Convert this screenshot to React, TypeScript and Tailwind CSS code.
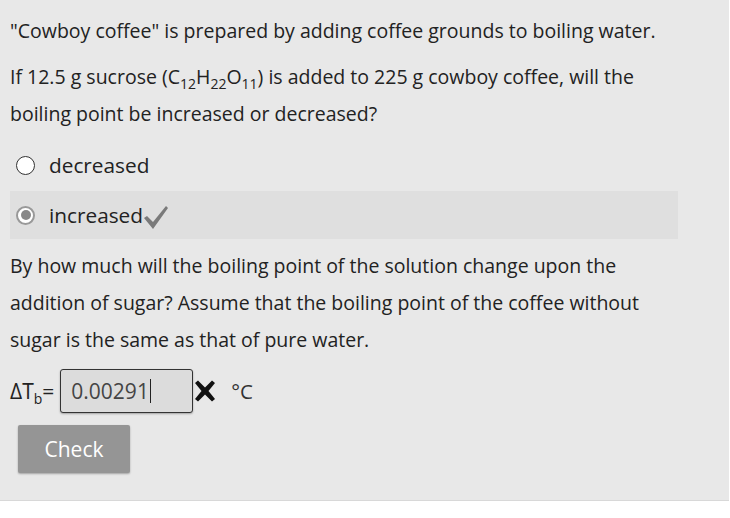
import React from "react";

export default function App() {
  const font = { fontFamily: '"Open Sans", "Noto Sans", sans-serif' };
  const sub = "text-[14px] align-baseline relative top-[5px]";
  return (
    <div className="w-[730px] h-[518px] bg-white" style={font}>
      <div className="w-[729px] h-[501px] bg-[#e8e8e8] border-b border-[#d8d8d8] pl-[10px] pt-[12px] text-[19.5px] text-[#222] leading-[37px]">
        <p>"Cowboy coffee" is prepared by adding coffee grounds to boiling water.</p>
        <p className="mt-[9px]">
          If 12.5 g sucrose (C<sub className={sub}>12</sub>H<sub className={sub}>22</sub>O<sub className={sub}>11</sub>) is added to 225 g cowboy coffee, will the
          <br />
          boiling point be increased or decreased?
        </p>
        <div className="mt-[16px] flex items-center h-[34px] pl-[6px]">
          <span className="w-[19px] h-[19px] rounded-full border border-[#333] bg-white" />
          <span className="ml-[14px] text-[20.8px]">decreased</span>
        </div>
        <div className="mt-[9px] flex items-center h-[48px] w-[668px] bg-[#dfdfdf] pl-[6px]">
          <span className="w-[19px] h-[19px] rounded-full border-2 border-[#999] bg-white flex items-center justify-center">
            <span className="w-[10px] h-[10px] rounded-full bg-[#888]" />
          </span>
          <span className="ml-[14px] text-[20.8px]">increased</span>
          <svg width="26" height="26" viewBox="0 0 26 26" className="mt-[4px]">
            <path d="M1 14 L4 12 L10 18 L23 2 L25 4 L10 25 Z" fill="#7a7a7a" />
          </svg>
        </div>
        <p className="mt-[8px]">
          By how much will the boiling point of the solution change upon the
          <br />
          addition of sugar? Assume that the boiling point of the coffee without
          <br />
          sugar is the same as that of pure water.
        </p>
        <div className="mt-[11px] flex items-center h-[44px]">
          <span className="text-[21px]">ΔT<sub className={sub}>b</sub>=</span>
          <div className="ml-[6px] w-[133px] h-[44px] rounded-[3px] border border-[#333] bg-[#dcdcdc] shadow-[0_1px_2px_rgba(0,0,0,0.3)] flex items-center pl-[10px] text-[#444] text-[21px]">
            0.00291<span className="inline-block w-[1px] h-[24px] bg-[#222] ml-[1px]" />
          </div>
          <svg width="22" height="22" viewBox="0 0 22 22" className="ml-[1px]">
            <path d="M1 3 L4 0.5 L11 7.5 L18 0.5 L21 3 L14.5 11 L21 19 L18 21.5 L11 14.5 L4 21.5 L1 19 L7.5 11 Z" fill="#111" />
          </svg>
          <span className="ml-[15px] text-[20.5px] text-[#333]">°C</span>
        </div>
        <button className="mt-[12px] ml-[8px] w-[112px] h-[48px] bg-[#959595] rounded-[2px] shadow-[0_1px_2px_rgba(0,0,0,0.3)] text-white text-[21px]" style={font}>
          Check
        </button>
      </div>
    </div>
  );
}
